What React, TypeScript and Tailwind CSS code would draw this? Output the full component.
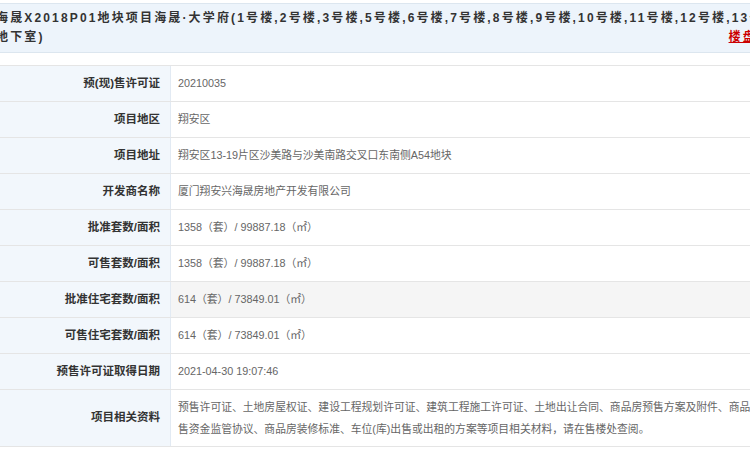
import React from "react";

const ROWS = [
  { label: "预(现)售许可证", value: "20210035" },
  { label: "项目地区", value: "翔安区" },
  { label: "项目地址", value: "翔安区13-19片区沙美路与沙美南路交叉口东南侧A54地块" },
  { label: "开发商名称", value: "厦门翔安兴海晟房地产开发有限公司" },
  { label: "批准套数/面积", value: "1358（套）/ 99887.18（㎡）" },
  { label: "可售套数/面积", value: "1358（套）/ 99887.18（㎡）" },
  { label: "批准住宅套数/面积", value: "614（套）/ 73849.01（㎡）", hover: true },
  { label: "可售住宅套数/面积", value: "614（套）/ 73849.01（㎡）" },
  { label: "预售许可证取得日期", value: "2021-04-30 19:07:46" },
];

const App: React.FC = () => {
  return (
    <div
      className="w-[750px] h-[450px] overflow-hidden bg-white"
      style={{ fontFamily: '"Liberation Sans", "Noto Sans CJK SC", sans-serif' }}
    >
      {/* title bar */}
      <div className="mt-[3px] h-[50px] border-y border-[#dce6ef] bg-[#edf4fb] overflow-hidden">
        <div className="w-[775px] -ml-[4px] pt-[5px] text-[12px] font-bold tracking-[2.15px] leading-[19px] text-[#333]">
          <div className="whitespace-nowrap">
            海晟X2018P01地块项目海晟·大学府(1号楼,2号楼,3号楼,5号楼,6号楼,7号楼,8号楼,9号楼,10号楼,11号楼,12号楼,13号楼
          </div>
          <div className="flex whitespace-nowrap">
            <span>地下室)</span>
            <a href="#" className="ml-auto text-[#cc0000] underline">楼盘表</a>
          </div>
        </div>
      </div>

      {/* info table */}
      <div className="mt-[12px] border-t border-[#e5e5e5] text-[12px]">
        {ROWS.map((r) => (
          <div key={r.label} className="flex h-[36px] border-b border-[#e5e5e5]">
            <div className="w-[171px] shrink-0 flex items-center justify-end pr-[10px] bg-[#f2f7fc] border-r border-[#e2eaf3] text-[11.5px] font-bold text-[#333]">
              {r.label}
            </div>
            <div className={`flex-1 flex items-center pl-[7px] text-[10.8px] text-[#666] whitespace-nowrap ${r.hover ? "bg-[#f5f5f5]" : ""}`}>
              {r.value}
            </div>
          </div>
        ))}
        <div className="flex h-[57px] border-b border-[#e5e5e5]">
          <div className="w-[171px] shrink-0 flex items-center justify-end pr-[10px] bg-[#f2f7fc] border-r border-[#e2eaf3] text-[11.5px] font-bold text-[#333]">
            项目相关资料
          </div>
          <div className="flex-1 flex flex-col justify-center pl-[7px] text-[10.8px] leading-[22px] text-[#666] whitespace-nowrap overflow-hidden">
            <div>预售许可证、土地房屋权证、建设工程规划许可证、建筑工程施工许可证、土地出让合同、商品房预售方案及附件、商品房预</div>
            <div>售资金监管协议、商品房装修标准、车位(库)出售或出租的方案等项目相关材料，请在售楼处查阅。</div>
          </div>
        </div>
      </div>
    </div>
  );
};

export default App;
